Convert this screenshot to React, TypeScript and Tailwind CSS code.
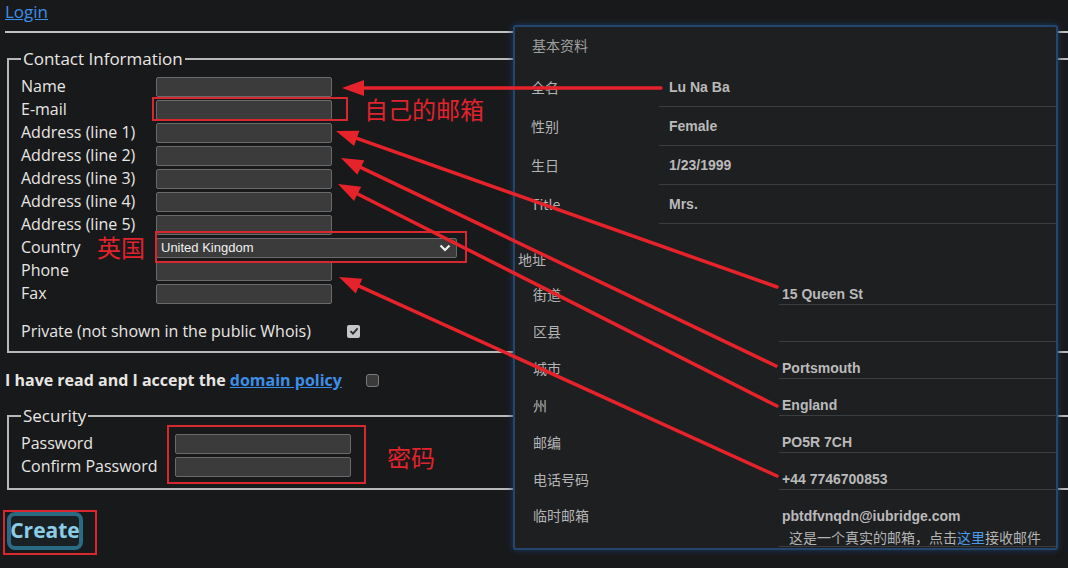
import React from 'react';

type Pt = [number, number];
type Arrow = { from: Pt; to: Pt };

// red annotation arrows drawn over the screenshot (tail -> tip)
const arrows: Arrow[] = [
  { from: [661, 88], to: [342, 88] },
  { from: [777, 287], to: [336, 131] },
  { from: [776, 366], to: [341, 158] },
  { from: [777, 406], to: [338, 184] },
  { from: [777, 476], to: [339, 277] },
];

const contactRows = [
  'Name',
  'E-mail',
  'Address (line 1)',
  'Address (line 2)',
  'Address (line 3)',
  'Address (line 4)',
  'Address (line 5)',
  'Country',
  'Phone',
  'Fax',
];

const basicInfo: [string, string][] = [
  ['全名', 'Lu Na Ba'],
  ['性别', 'Female'],
  ['生日', '1/23/1999'],
  ['Title', 'Mrs.'],
];

const addressInfo: [string, string][] = [
  ['街道', '15 Queen St'],
  ['区县', ''],
  ['城市', 'Portsmouth'],
  ['州', 'England'],
  ['邮编', 'PO5R 7CH'],
  ['电话号码', '+44 7746700853'],
];

const headPoints = (a: Arrow) => {
  const [x1, y1] = a.from;
  const [x2, y2] = a.to;
  const len = Math.hypot(x2 - x1, y2 - y1);
  const ux = (x2 - x1) / len;
  const uy = (y2 - y1) / len;
  const L = 22;
  const W = 8;
  const bx = x2 - ux * L;
  const by = y2 - uy * L;
  return {
    points: `${x2},${y2} ${bx - uy * W},${by + ux * W} ${bx + uy * W},${by - ux * W}`,
    end: [x2 - ux * L * 0.7, y2 - uy * L * 0.7] as Pt,
  };
};

const TextInput = () => (
  <div className="h-[20px] w-[176px] rounded-[2px] border border-[#6a6a6a] bg-[#3b3b3b]" />
);

const App = () => {
  return (
    <div className="relative h-[568px] w-[1068px] overflow-hidden bg-[#18191b] font-['Open_Sans',sans-serif] text-[16px] text-[#e8e6e3]">
      <div className="px-[5px]">
        <a href="#" className="block w-fit text-[17px] leading-[24px] text-[#3d8ee6] underline">
          Login
        </a>
        <hr className="-mr-[40px] mt-[7px] border-0 border-t-2 border-[#c2c2c2]" />

        {/* Contact */}
        <fieldset className="-mr-[40px] ml-[2px] mt-[15px] border-2 border-[#b8b8b8] pb-[10px] pl-[12px] pt-[7px]">
          <legend className="px-[2px] text-[17px] leading-[22px]">Contact Information</legend>
          <div className="grid grid-cols-[135px_max-content] items-center gap-y-[3px]">
            {contactRows.map((label) => (
              <React.Fragment key={label}>
                <div className="-mt-[2px] leading-[20px]">{label}</div>
                {label === 'Country' ? (
                  <div className="flex h-[20px] w-[301px] items-center justify-between rounded-[2px] border border-[#6a6a6a] bg-[#3b3b3b] pl-[4px] pr-[5px] font-['Liberation_Sans',sans-serif] text-[13px] text-[#f0f0f0]">
                    <span>United Kingdom</span>
                    <svg width="12" height="8" viewBox="0 0 12 8">
                      <path d="M1.5 1.5 L6 6 L10.5 1.5" fill="none" stroke="#f0f0f0" strokeWidth="2.2" />
                    </svg>
                  </div>
                ) : (
                  <TextInput />
                )}
              </React.Fragment>
            ))}
          </div>
          <div className="mt-[17px] flex h-[20px] items-center">
            <span className="w-[326px] leading-[20px]">Private (not shown in the public Whois)</span>
            <span className="flex h-[13px] w-[13px] items-center justify-center rounded-[2px] bg-[#c6c6c6]">
              <svg width="10" height="10" viewBox="0 0 10 10">
                <path d="M1.5 5.2 L4 7.6 L8.6 2.4" fill="none" stroke="#2b2b2b" strokeWidth="1.8" />
              </svg>
            </span>
          </div>
        </fieldset>

        <div className="mt-[16px] flex h-[22px] items-center font-bold">
          <span className="w-[361px]">
            I have read and I accept the{' '}
            <a href="#" className="text-[#3d8ee6] underline">
              domain policy
            </a>
          </span>
          <span className="h-[13px] w-[13px] rounded-[3px] border border-[#7a7a7a] bg-[#3a3a3a]" />
        </div>

        {/* Security */}
        <fieldset className="-mr-[40px] ml-[2px] mt-[14px] border-2 border-[#b8b8b8] pb-[11px] pl-[12px] pt-[7px]">
          <legend className="px-[2px] text-[17px] leading-[22px]">Security</legend>
          <div className="grid grid-cols-[154px_max-content] items-center gap-y-[3px]">
            <div className="-mt-[2px] leading-[20px]">Password</div>
            <TextInput />
            <div className="-mt-[2px] leading-[20px]">Confirm Password</div>
            <TextInput />
          </div>
        </fieldset>

        <button className="ml-[2px] mt-[22px] flex h-[38px] w-[76px] items-center justify-center rounded-[8px] border-4 border-[#2a6b83] bg-[#1a2125] text-[21px] font-bold text-[#8ccde6]">
          Create
        </button>
      </div>

      {/* Popup info panel */}
      <div className="absolute left-[513px] top-[25px] h-[525px] w-[545px] rounded-[3px] border-2 border-[#24466e] bg-[#1e1f21] font-['Liberation_Sans','Noto_Sans_CJK_SC',sans-serif] text-[14px] text-[#b4b4b4] shadow-[0_0_6px_#1d3b60]">
        <div className="pl-[17px] pt-[10px] font-['Noto_Sans_CJK_SC',sans-serif] leading-[16px] text-[#a0a0a0]">基本资料</div>
        <div className="mt-[15px]">
          {basicInfo.map(([k, v]) => (
            <div key={k} className="flex h-[39px]">
              <div className="flex w-[144px] items-center pl-[16px] font-['Noto_Sans_CJK_SC',sans-serif]">{k}</div>
              <div className="flex flex-1 items-center border-b border-[#3c3d3f] pl-[10px] font-bold text-[#bababa]">
                {v}
              </div>
            </div>
          ))}
        </div>
        <div className="pl-[3px] pt-[27px] font-['Noto_Sans_CJK_SC',sans-serif] leading-[16px]">地址</div>
        <div className="mt-[1px]">
          {addressInfo.map(([k, v]) => (
            <div key={k} className="flex h-[37px]">
              <div className="flex w-[264px] items-end pb-[3px] pl-[18px] font-['Noto_Sans_CJK_SC',sans-serif] leading-[16px] text-[#b4b4b4]">
                {k}
              </div>
              <div className="flex flex-1 items-end border-b border-[#3c3d3f] pb-[2px] pl-[3px] font-bold leading-[16px] text-[#bababa]">
                {v}
              </div>
            </div>
          ))}
          <div className="flex h-[57px]">
            <div className="w-[264px] pl-[18px] pt-[17px] font-['Noto_Sans_CJK_SC',sans-serif] leading-[16px]">临时邮箱</div>
            <div className="flex-1 border-b border-[#3c3d3f] pl-[3px] pt-[18px] leading-[16px]">
              <div className="font-bold text-[#bababa]">pbtdfvnqdn@iubridge.com</div>
              <div className="mt-[5px] pl-[7px] font-['Noto_Sans_CJK_SC',sans-serif] text-[#b4b4b4]">
                这是一个真实的邮箱，点击<span className="text-[#4a9be8]">这里</span>接收邮件
              </div>
            </div>
          </div>
        </div>
      </div>

      {/* Red annotations */}
      <div className="absolute left-[152px] top-[97px] h-[24px] w-[196px] border-2 border-[#d8272f]" />
      <div className="absolute left-[155px] top-[231px] h-[32px] w-[312px] border-2 border-[#d8272f]" />
      <div className="absolute left-[167px] top-[425px] h-[59px] w-[199px] border-2 border-[#d8272f]" />
      <div className="absolute left-[3px] top-[510px] h-[45px] w-[94px] border-2 border-[#d8272f]" />

      <div className="absolute left-[364px] top-[97px] font-['Noto_Sans_CJK_SC',sans-serif] text-[24px] leading-[24px] text-[#e0232c]">
        自己的邮箱
      </div>
      <div className="absolute left-[97px] top-[235px] font-['Noto_Sans_CJK_SC',sans-serif] text-[24px] leading-[24px] text-[#e0232c]">
        英国
      </div>
      <div className="absolute left-[387px] top-[445px] font-['Noto_Sans_CJK_SC',sans-serif] text-[24px] leading-[24px] text-[#e0232c]">
        密码
      </div>

      <svg className="pointer-events-none absolute left-0 top-0" width="1068" height="568">
        {arrows.map((a, i) => {
          const h = headPoints(a);
          return (
            <g key={i}>
              <line
                x1={a.from[0]}
                y1={a.from[1]}
                x2={h.end[0]}
                y2={h.end[1]}
                stroke="#e6222b"
                strokeWidth="3.5"
                strokeLinecap="round"
              />
              <polygon points={h.points} fill="#e6222b" />
            </g>
          );
        })}
      </svg>
    </div>
  );
};

export default App;
